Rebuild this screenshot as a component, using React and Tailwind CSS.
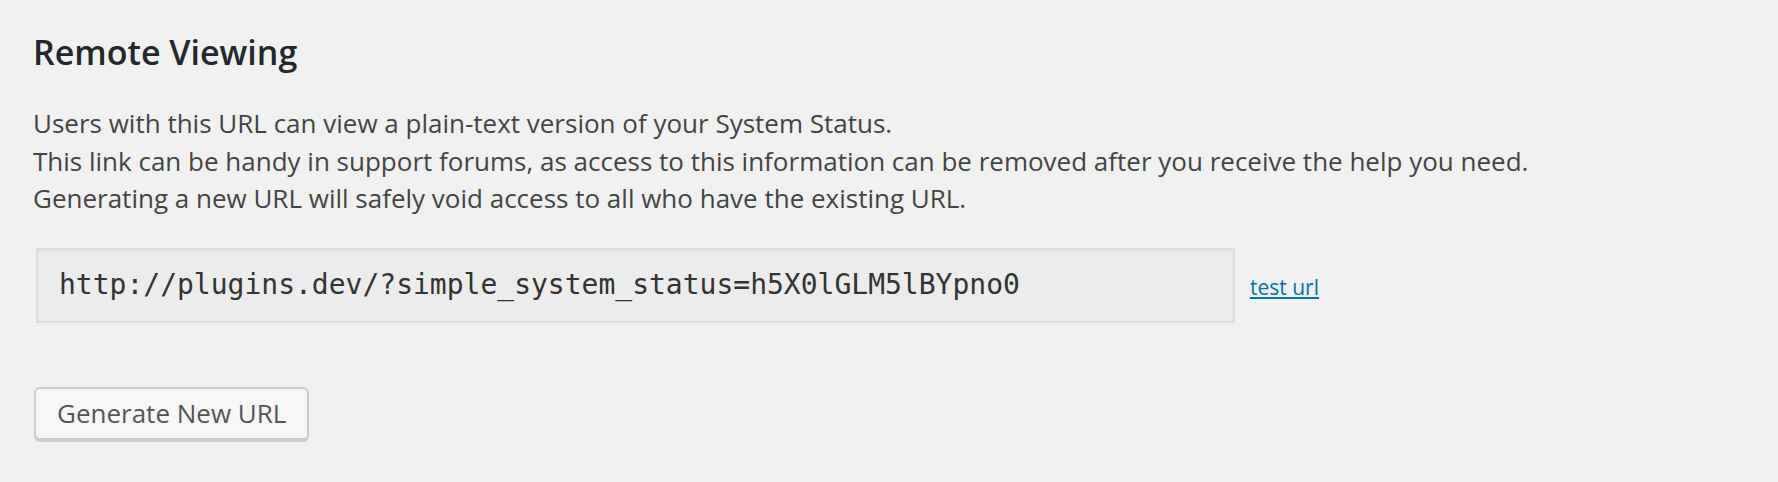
import React from 'react';

const RemoteViewing = () => {
  const url = 'http://plugins.dev/?simple_system_status=h5X0lGLM5lBYpno0';

  return (
    <div className="min-h-[482px] bg-[#f1f1f1] pl-[33px] pt-[32px] font-['Open_Sans',sans-serif]">
      <h3 className="text-[34px] leading-[40px] font-semibold text-[#23282d]">Remote Viewing</h3>

      <p className="mt-[33px] text-[26px] leading-[37.5px] text-[#444]">
        Users with this URL can view a plain-text version of your System Status.
        <br />
        This link can be handy in support forums, as access to this information can be removed after you receive the help you need.
        <br />
        Generating a new URL will safely void access to all who have the existing URL.
      </p>

      <div className="mt-[30px] flex items-center">
        <div className="ml-[3px] flex h-[75px] w-[1199px] items-center border-2 border-[#dedede] bg-[#ececec] pl-[21px] shadow-[inset_0_1px_2px_rgba(0,0,0,0.07)]">
          <span className="font-['DejaVu_Sans_Mono',monospace] text-[28px] text-[#333]">{url}</span>
        </div>
        <a href="#" className="ml-[15px] mt-[6px] text-[21px] text-[#0073aa] underline">
          test url
        </a>
      </div>

      <button
        type="button"
        className="mt-[64px] ml-[1px] h-[53px] rounded-[6px] border-2 border-[#cccccc] bg-[#f7f7f7] px-[21px] text-[26px] text-[#555] shadow-[0_2px_0_#cccccc]"
      >
        Generate New URL
      </button>
    </div>
  );
};

export default function App() {
  return <RemoteViewing />;
}
